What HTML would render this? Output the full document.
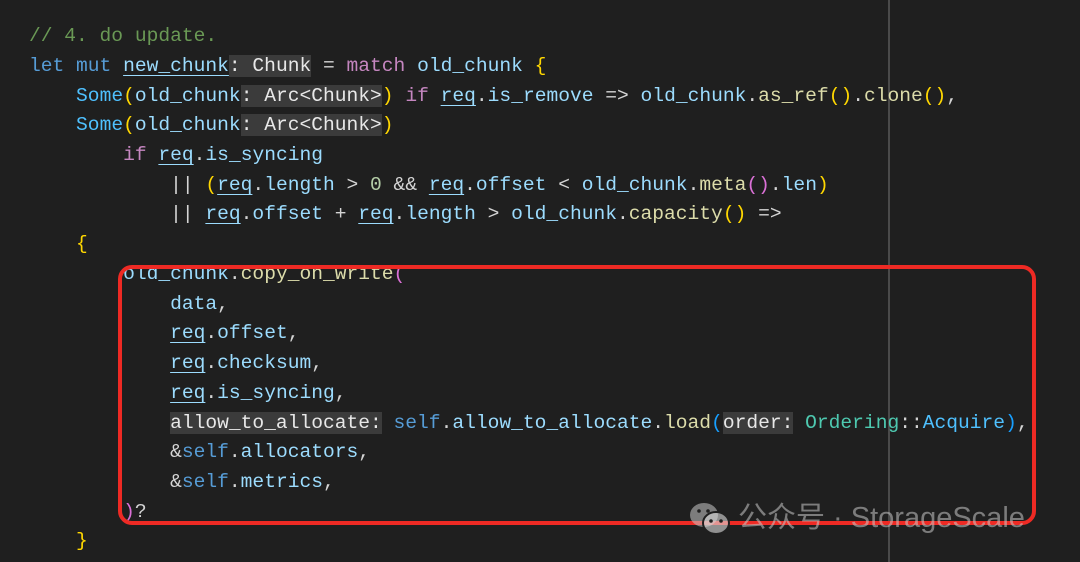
<!DOCTYPE html>
<html><head><meta charset="utf-8"><style>
html,body{margin:0;padding:0;}
body{width:1080px;height:562px;background:#1f1f1f;position:relative;overflow:hidden;font-family:"Liberation Mono","DejaVu Sans Mono",monospace;font-size:19.6px;color:#d4d4d4;}
.l{position:absolute;left:29px;white-space:pre;height:30px;line-height:30px;}
.c{color:#6a9955}.k{color:#569cd6}.m{color:#c586c0}.v{color:#9cdcfe}.f{color:#dcdcaa}.t{color:#4ec9b0}.s{color:#4fc1ff}.n{color:#b5cea8}
.g{color:#ffd700}.p{color:#da70d6}.b{color:#179fff}
.u{text-decoration:underline;text-decoration-color:#9cdcfe;text-underline-offset:4px}
.h{background:#3b3b3b;color:#e8e8e8}
.vl{position:absolute;left:888px;top:0;width:2px;height:562px;background:#4a4a4a}
.box{position:absolute;left:118px;top:265px;width:918px;height:260px;border:4px solid #ee2a24;border-radius:14px;box-sizing:border-box}
.wm{position:absolute;left:688px;top:499px;font-family:"Liberation Sans","Noto Sans CJK SC",sans-serif;font-size:29px;color:rgba(200,200,200,0.55);white-space:nowrap;line-height:38px}
</style></head><body>
<div class="vl"></div>
<div class="l" style="top:21px"><span class="c">// 4. do update.</span></div>
<div class="l" style="top:51px"><span class="k">let mut </span><span class="v u">new_chunk</span><span class="h">: Chunk</span> = <span class="m">match</span> <span class="v">old_chunk</span> <span class="g">{</span></div>
<div class="l" style="top:81px">    <span class="s">Some</span><span class="g">(</span><span class="v">old_chunk</span><span class="h">: Arc&lt;Chunk&gt;</span><span class="g">)</span> <span class="m">if</span> <span class="v u">req</span>.<span class="v">is_remove</span> =&gt; <span class="v">old_chunk</span>.<span class="f">as_ref</span><span class="g">()</span>.<span class="f">clone</span><span class="g">()</span>,</div>
<div class="l" style="top:110px">    <span class="s">Some</span><span class="g">(</span><span class="v">old_chunk</span><span class="h">: Arc&lt;Chunk&gt;</span><span class="g">)</span></div>
<div class="l" style="top:140px">        <span class="m">if</span> <span class="v u">req</span>.<span class="v">is_syncing</span></div>
<div class="l" style="top:170px">            || <span class="g">(</span><span class="v u">req</span>.<span class="v">length</span> &gt; <span class="n">0</span> &amp;&amp; <span class="v u">req</span>.<span class="v">offset</span> &lt; <span class="v">old_chunk</span>.<span class="f">meta</span><span class="p">()</span>.<span class="v">len</span><span class="g">)</span></div>
<div class="l" style="top:199px">            || <span class="v u">req</span>.<span class="v">offset</span> + <span class="v u">req</span>.<span class="v">length</span> &gt; <span class="v">old_chunk</span>.<span class="f">capacity</span><span class="g">()</span> =&gt;</div>
<div class="l" style="top:229px">    <span class="g">{</span></div>
<div class="l" style="top:259px">        <span class="v">old_chunk</span>.<span class="f">copy_on_write</span><span class="p">(</span></div>
<div class="l" style="top:289px">            <span class="v">data</span>,</div>
<div class="l" style="top:318px">            <span class="v u">req</span>.<span class="v">offset</span>,</div>
<div class="l" style="top:348px">            <span class="v u">req</span>.<span class="v">checksum</span>,</div>
<div class="l" style="top:378px">            <span class="v u">req</span>.<span class="v">is_syncing</span>,</div>
<div class="l" style="top:408px">            <span class="h">allow_to_allocate:</span> <span class="k">self</span>.<span class="v">allow_to_allocate</span>.<span class="f">load</span><span class="b">(</span><span class="h">order:</span> <span class="t">Ordering</span>::<span class="s">Acquire</span><span class="b">)</span>,</div>
<div class="l" style="top:437px">            &amp;<span class="k">self</span>.<span class="v">allocators</span>,</div>
<div class="l" style="top:467px">            &amp;<span class="k">self</span>.<span class="v">metrics</span>,</div>
<div class="l" style="top:497px">        <span class="p">)</span>?</div>
<div class="l" style="top:526px">    <span class="g">}</span></div>
<div class="box"></div>
<div class="wm"><svg width="46" height="36" viewBox="0 0 46 36" style="vertical-align:middle;margin-right:4px"><ellipse cx="16" cy="14" rx="14" ry="12" fill="rgba(200,200,200,0.55)"/><ellipse cx="28" cy="22" rx="13" ry="11" fill="rgba(220,220,220,0.6)" stroke="#1f1f1f" stroke-width="2"/><circle cx="23" cy="20" r="1.8" fill="#1f1f1f"/><circle cx="33" cy="20" r="1.8" fill="#1f1f1f"/><circle cx="11" cy="10" r="1.8" fill="#1f1f1f"/><circle cx="20" cy="10" r="1.8" fill="#1f1f1f"/></svg>公众号 · StorageScale</div>
</body></html>
